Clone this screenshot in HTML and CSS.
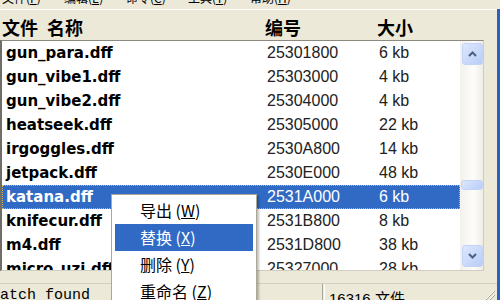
FILE: index.html
```html
<!DOCTYPE html>
<html lang="zh">
<head>
  <meta charset="UTF-8" />
  <title>IMG 文件</title>
  <link rel="stylesheet" href="styles.css">
</head>
<body>
  <div class="menubar">
    <div class="menu-items">
      <span>文件(<u>F</u>)</span>
      <span>编辑(<u>E</u>)</span>
      <span>命令(<u>C</u>)</span>
      <span>工具(<u>T</u>)</span>
      <span>帮助(<u>H</u>)</span>
    </div>
  </div>

  <div class="window">
    <div class="columns header">
      <span class="col-title"><span>文件</span><span>名称</span></span>
      <span>编号</span>
      <span>大小</span>
    </div>

    <div class="list">
      <div class="rows">
        <div class="columns row"><span class="name">gun_para.dff</span><span>25301800</span><span>6 kb</span></div>
        <div class="columns row"><span class="name">gun_vibe1.dff</span><span>25303000</span><span>4 kb</span></div>
        <div class="columns row"><span class="name">gun_vibe2.dff</span><span>25304000</span><span>4 kb</span></div>
        <div class="columns row"><span class="name">heatseek.dff</span><span>25305000</span><span>22 kb</span></div>
        <div class="columns row"><span class="name">irgoggles.dff</span><span>2530A800</span><span>14 kb</span></div>
        <div class="columns row"><span class="name">jetpack.dff</span><span>2530E000</span><span>48 kb</span></div>
        <div class="columns row selected"><span class="name">katana.dff</span><span>2531A000</span><span>6 kb</span></div>
        <div class="columns row"><span class="name">knifecur.dff</span><span>2531B800</span><span>8 kb</span></div>
        <div class="columns row"><span class="name">m4.dff</span><span>2531D800</span><span>38 kb</span></div>
        <div class="columns row"><span class="name">micro_uzi.dff</span><span>25327000</span><span>28 kb</span></div>
      </div>

      <div class="scrollbar">
        <div class="sb-btn">
          <svg width="9" height="6" viewBox="0 0 9 6"><path d="M1 5 L4.5 1.5 L8 5" fill="none" stroke="#4d6185" stroke-width="2"/></svg>
        </div>
        <div class="sb-gap"></div>
        <div class="sb-thumb"></div>
        <div class="sb-fill"></div>
        <div class="sb-btn">
          <svg width="9" height="6" viewBox="0 0 9 6"><path d="M1 1 L4.5 4.5 L8 1" fill="none" stroke="#4d6185" stroke-width="2"/></svg>
        </div>
      </div>
    </div>

    <div class="statusbar">
      <div class="panel panel-left">atch found</div>
      <div class="panel panel-right">16316 文件</div>
      <div class="grip">
        <svg width="12" height="12" viewBox="0 0 12 12">
          <path d="M11 3 L3 11 M11 7 L7 11" stroke="#fff" stroke-width="1"/>
          <path d="M12 3 L3 12 M12 7 L7 12" stroke="#a6a394" stroke-width="1"/>
        </svg>
      </div>
    </div>
  </div>

  <!-- 右键菜单 -->
  <div class="context-menu">
    <div class="menu-item">导出 (<u>W</u>)</div>
    <div class="menu-item active">替换 (<u>X</u>)</div>
    <div class="menu-item">删除 (<u>Y</u>)</div>
    <div class="menu-item">重命名 (<u>Z</u>)</div>
  </div>
</body>
</html>
```

FILE: styles.css
```css
:root {
  --face: #ece9d8;
  --select: #316ac5;
  --xp-blue: #2d5fc4;
  --text: #222;
}

* {
  margin: 0;
  padding: 0;
  box-sizing: border-box;
}

body {
  width: 500px;
  height: 300px;
  overflow: hidden;
  background: var(--face);
  font-family: "Liberation Sans", "Noto Sans CJK SC", sans-serif;
  color: #000;
}

/* menu bar, only the lower part is visible */
.menubar {
  height: 9px;
  overflow: hidden;
}

.menu-items {
  display: flex;
  margin-top: -8px;
  font-size: 12px;
  line-height: 12px;
  font-family: "Noto Sans CJK SC", sans-serif;
}

.menu-items span {
  width: 62px;
  padding-left: 2px;
}

.window {
  border-right: 3px solid var(--xp-blue);
  height: 291px;
  display: flex;
  flex-direction: column;
}

.columns {
  display: grid;
  grid-template-columns: 263px 112px 1fr;
  padding-left: 2px;
}

.header {
  border-top: 1px solid #fff;
  height: 31px;
  padding-top: 4px;
  align-items: center;
  font-family: "Noto Sans CJK SC", sans-serif;
  font-weight: 700;
  font-size: 18px;
  line-height: 26px;
}

.col-title {
  display: flex;
  gap: 9px;
}

.list {
  display: flex;
  height: 231px;
  margin-right: 13px;
  border-top: 1px solid #8c8a80;
  border-left: 2px solid #6f6d66;
  border-right: 1px solid #cfccc0;
  border-bottom: 1px solid #cfccc0;
  background: #fff;
}

.rows {
  width: 458px;
  overflow: hidden;
}

.row {
  height: 24px;
  align-items: center;
  font-size: 16px;
  color: var(--text);
  white-space: nowrap;
}

.row .name {
  font-family: "DejaVu Sans", sans-serif;
  font-weight: 700;
  font-size: 15px;
  color: #000;
  padding-left: 2px;
}

.row.selected {
  background: var(--select);
  outline: 1px dotted #d8b64a;
  outline-offset: -1px;
}

.row.selected span {
  color: #fff;
}

/* xp style scrollbar */
.scrollbar {
  width: 23px;
  display: flex;
  flex-direction: column;
  padding: 2px 0 3px 2px;
  background: linear-gradient(to right, #f3f1ec, #fdfdfb 60%, #eeede5);
}

.sb-btn,
.sb-thumb {
  background: linear-gradient(135deg, #dde7fd, #b9cdf8);
  border: 1px solid #c3d3f7;
  border-radius: 3px;
}

.sb-btn {
  height: 22px;
  display: flex;
  align-items: center;
  justify-content: center;
}

.sb-gap {
  height: 115px;
}

.sb-thumb {
  height: 10px;
  margin-left: -1px;
}

.sb-fill {
  flex: 1;
}

.statusbar {
  margin-top: 12px;
  flex: 1;
  display: flex;
  border-top: 1px solid #d2cfc2;
  font-size: 15px;
  overflow: hidden;
}

.panel {
  padding-top: 3px;
  white-space: nowrap;
}

.panel-left {
  width: 323px;
  font-family: "Liberation Mono", monospace;
  border-right: 1px solid #aca899;
}

.panel-right {
  flex: 1;
  padding-left: 4px;
  border-left: 1px solid #fff;
  margin-left: 1px;
}

.grip {
  width: 14px;
  display: flex;
  align-items: flex-end;
}

/* popup menu over the list */
.context-menu {
  position: absolute;
  left: 111px;
  top: 194px;
  width: 146px;
  height: 120px;
  background: #fff;
  border: 1px solid #aca899;
  padding: 2px 3px;
  box-shadow: 2px 2px 2px rgba(0, 0, 0, 0.25);
  font-family: "Noto Sans CJK SC", sans-serif;
  font-size: 16px;
}

.menu-item {
  height: 27px;
  line-height: 27px;
  padding-left: 25px;
  color: #000;
}

.menu-item.active {
  background: var(--select);
  color: #fff;
}
```
